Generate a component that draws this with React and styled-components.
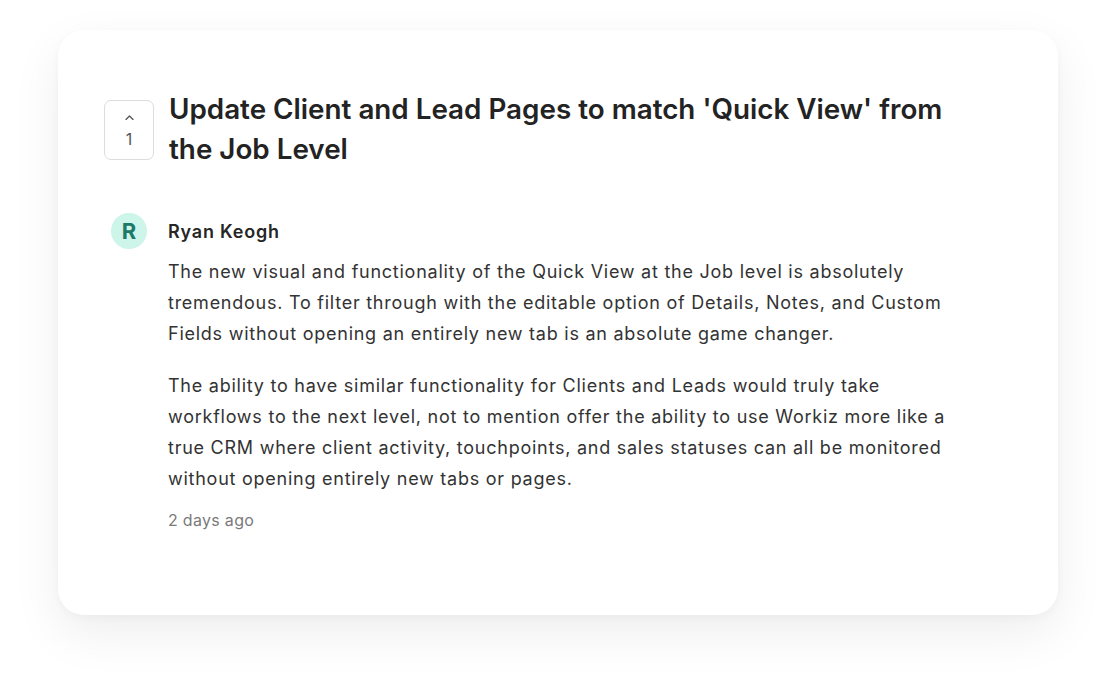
import React from 'react'
import styled, { createGlobalStyle } from 'styled-components'

const GlobalStyle = createGlobalStyle`
    * { box-sizing: border-box; }
    body {
        margin: 0;
        background: #ffffff;
        font-family: Inter, "Noto Sans", sans-serif;
        -webkit-font-smoothing: antialiased;
    }
`

function App() {
    return (
        <Page>
            <GlobalStyle />
            <Card>
                <Header>
                    <VoteBox>
                        <Chevron viewBox="0 0 12 8" width="11" height="7">
                            <path d="M2 6.2 L6 2.2 L10 6.2" fill="none" stroke="#555" strokeWidth="1.5" strokeLinecap="round" strokeLinejoin="round" />
                        </Chevron>
                        <VoteCount>1</VoteCount>
                    </VoteBox>
                    <Title>Update Client and Lead Pages to match 'Quick View' from the Job Level</Title>
                </Header>

                <Comment>
                    <AvatarCol>
                        <Avatar>R</Avatar>
                    </AvatarCol>
                    <CommentBody>
                        <Author>Ryan Keogh</Author>
                        <Paragraph>
                            The new visual and functionality of the Quick View at the Job level is absolutely tremendous. To filter through with the editable option of Details, Notes, and Custom Fields without opening an entirely new tab is an absolute game changer.
                        </Paragraph>
                        <Paragraph>
                            The ability to have similar functionality for Clients and Leads would truly take workflows to the next level, not to mention offer the ability to use Workiz more like a true CRM where client activity, touchpoints, and sales statuses can all be monitored without opening entirely new tabs or pages.
                        </Paragraph>
                        <TimeAgo>2 days ago</TimeAgo>
                    </CommentBody>
                </Comment>
            </Card>
        </Page>
    )
}

export default App


const Page = styled.div`
    width: 1116px;
    height: 700px;
    padding: 30px 58px 0;
    background: #fff;
`

const Card = styled.div`
    width: 1000px;
    height: 585px;
    background: #fff;
    border-radius: 26px;
    padding: 59px 100px 0 46px;
    box-shadow: 0 3px 10px rgba(0, 0, 0, 0.03), 0 18px 50px rgba(0, 0, 0, 0.07);
`

const Header = styled.div`
    display: flex;
    align-items: flex-start;
    gap: 15px;
`

const VoteBox = styled.div`
    flex: none;
    width: 50px;
    height: 60px;
    margin-top: 11px;
    border: 1px solid #dcdcdc;
    border-radius: 7px;
    display: flex;
    flex-direction: column;
    align-items: center;
    justify-content: center;
    gap: 9px;
    padding-top: 2px;
`

const Chevron = styled.svg`
    display: block;
`

const VoteCount = styled.span`
    font-size: 16px;
    line-height: 18px;
    color: #555;
`

const Title = styled.h1`
    margin: 0;
    max-width: 790px;
    font-size: 27.8px;
    line-height: 40px;
    font-weight: 600;
    color: #232323;
`

const Comment = styled.div`
    display: flex;
    gap: 14px;
    margin-top: 44px;
`

const AvatarCol = styled.div`
    flex: none;
    width: 50px;
    display: flex;
    justify-content: center;
`

const Avatar = styled.div`
    width: 36px;
    height: 36px;
    border-radius: 50%;
    background: #cdf5ea;
    color: #1d7a69;
    font-weight: 700;
    font-size: 22px;
    display: flex;
    align-items: center;
    justify-content: center;
`

const CommentBody = styled.div`
    flex: 1;
    max-width: 790px;
`

const Author = styled.div`
    height: 36px;
    display: flex;
    align-items: center;
    font-size: 18px;
    font-weight: 600;
    letter-spacing: 0.8px;
    color: #262626;
    margin-bottom: 7px;
`

const Paragraph = styled.p`
    margin: 0 0 21px;
    font-size: 18px;
    line-height: 31px;
    letter-spacing: 0.75px;
    color: #333;
`

const TimeAgo = styled.div`
    margin-top: -6px;
    font-size: 16px;
    line-height: 22px;
    letter-spacing: 0.3px;
    color: #7a7a7a;
`
